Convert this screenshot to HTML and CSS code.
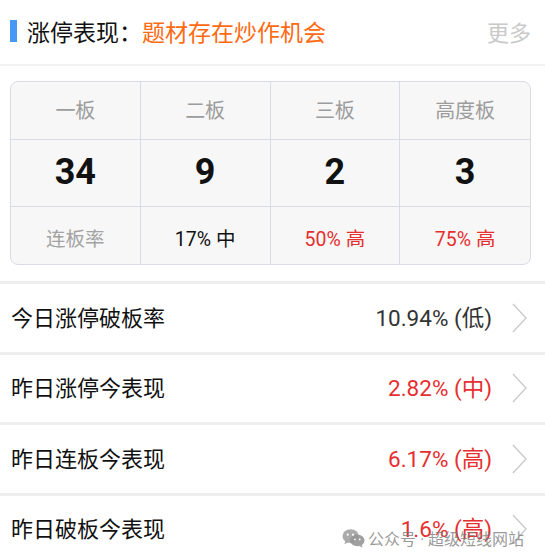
FILE: index.html
```html
<!DOCTYPE html>
<html lang="zh-CN">
<head>
    <meta charset="UTF-8">
    <meta name="viewport" content="width=device-width, initial-scale=1.0">
    <title>涨停表现</title>
    <link rel="stylesheet" href="styles.css">
</head>
<body>
    <div class="header">
        <span class="header-bar"></span>
        <span class="header-title">涨停表现：</span>
        <span class="header-theme">题材存在炒作机会</span>
        <span class="header-more">更多</span>
    </div>

    <div class="board-table">
        <div class="cell cell-label">一板</div>
        <div class="cell cell-label">二板</div>
        <div class="cell cell-label">三板</div>
        <div class="cell cell-label">高度板</div>

        <div class="cell cell-num">34</div>
        <div class="cell cell-num">9</div>
        <div class="cell cell-num">2</div>
        <div class="cell cell-num">3</div>

        <div class="cell cell-rate muted">连板率</div>
        <div class="cell cell-rate">17% 中</div>
        <div class="cell cell-rate up">50% 高</div>
        <div class="cell cell-rate up">75% 高</div>
    </div>

    <ul class="stat-list">
        <li class="stat-row">
            <span class="stat-name">今日涨停破板率</span>
            <span class="stat-value">10.94% (低)</span>
            <svg class="chevron" viewBox="0 0 16 32"><path d="M1 1 L15 16 L1 31"/></svg>
        </li>
        <li class="stat-row">
            <span class="stat-name">昨日涨停今表现</span>
            <span class="stat-value up">2.82% (中)</span>
            <svg class="chevron" viewBox="0 0 16 32"><path d="M1 1 L15 16 L1 31"/></svg>
        </li>
        <li class="stat-row">
            <span class="stat-name">昨日连板今表现</span>
            <span class="stat-value up">6.17% (高)</span>
            <svg class="chevron" viewBox="0 0 16 32"><path d="M1 1 L15 16 L1 31"/></svg>
        </li>
        <li class="stat-row">
            <span class="stat-name">昨日破板今表现</span>
            <span class="stat-value up">1.6% (高)</span>
            <svg class="chevron" viewBox="0 0 16 32"><path d="M1 1 L15 16 L1 31"/></svg>
        </li>
    </ul>

    <div class="watermark">
        <svg class="wm-icon" viewBox="0 0 24 20">
            <ellipse cx="9" cy="8" rx="8.5" ry="7.2"/>
            <path d="M3.5 13 L2.5 16.5 L7 14.2 Z"/>
            <ellipse cx="16" cy="12.5" rx="7.5" ry="6.2" class="wm-back"/>
            <path d="M20.5 17 L21.5 19.8 L17.8 18.3 Z" class="wm-back"/>
            <circle cx="6" cy="6.5" r="1.1" class="wm-eye"/>
            <circle cx="11.5" cy="6.5" r="1.1" class="wm-eye"/>
            <circle cx="13.5" cy="11.5" r="0.9" class="wm-eye"/>
            <circle cx="18.5" cy="11.5" r="0.9" class="wm-eye"/>
        </svg>
        <span>公众号 · 超级短线网站</span>
    </div>
</body>
</html>
```

FILE: styles.css
```css
* {
    box-sizing: border-box;
}
body {
    margin: 0;
    background: #fff;
    font-family: Roboto, "Noto Sans CJK SC", sans-serif;
    color: #111;
    overflow: hidden;
}
.header {
    display: flex;
    align-items: center;
    height: 66px;
    padding: 0 14px 2px 10px;
    border-bottom: 2px solid #f2f2f2;
}
.header-bar {
    width: 7px;
    height: 22px;
    background: #4a98f5;
    margin-right: 10px;
}
.header-title {
    font-size: 23px;
    color: #111;
}
.header-theme {
    font-size: 23px;
    color: #ff6a13;
}
.header-more {
    margin-left: auto;
    font-size: 22px;
    color: #c9c9c9;
}
.board-table {
    display: grid;
    grid-template-columns: 1fr 1fr 1fr 1fr;
    grid-template-rows: 58px 67px 57px;
    margin: 15px 14px 0 10px;
    background: #f7f7f7;
    border: 1px solid #d9dbe8;
    border-radius: 8px;
    overflow: hidden;
}
.cell {
    display: flex;
    align-items: center;
    justify-content: center;
    border-right: 1px solid #d9dbe8;
    border-bottom: 1px solid #d9dbe8;
}
.cell:nth-child(4n) {
    border-right: none;
}
.cell:nth-child(n+9) {
    border-bottom: none;
}
.cell-label {
    font-size: 20px;
    color: #9c9c9c;
    padding-bottom: 2px;
}
.cell-num {
    font-size: 36px;
    font-weight: 700;
    color: #111;
    padding-bottom: 2px;
}
.cell-rate {
    font-size: 19.5px;
    padding-top: 3px;
}
.muted {
    color: #a3a3a3;
}
.up {
    color: #e62f2f;
}
.stat-list {
    list-style: none;
    margin: 16px 0 0;
    padding: 0;
}
.stat-row {
    display: flex;
    align-items: center;
    height: 70.5px;
    padding: 0 18px 4px 11px;
    border-top: 3px solid #eeeeee;
}
.stat-name {
    font-size: 22px;
    color: #111;
}
.stat-value {
    margin-left: auto;
    font-size: 22.5px;
}
.stat-value:not(.up) {
    color: #333;
}
.chevron {
    width: 15px;
    height: 32px;
    margin-left: 20px;
    margin-top: 4px;
    fill: none;
    stroke: #c9c9c9;
    stroke-width: 1.4;
}
.watermark {
    position: absolute;
    left: 342px;
    top: 526px;
    display: flex;
    align-items: center;
    gap: 3px;
    font-size: 16px;
    color: rgba(120, 120, 120, 0.75);
}
.wm-icon {
    width: 23px;
    height: 20px;
    fill: rgba(150, 150, 150, 0.8);
}
.wm-back {
    fill: rgba(150, 150, 150, 0.9);
}
.wm-eye {
    fill: #fff;
}
```
